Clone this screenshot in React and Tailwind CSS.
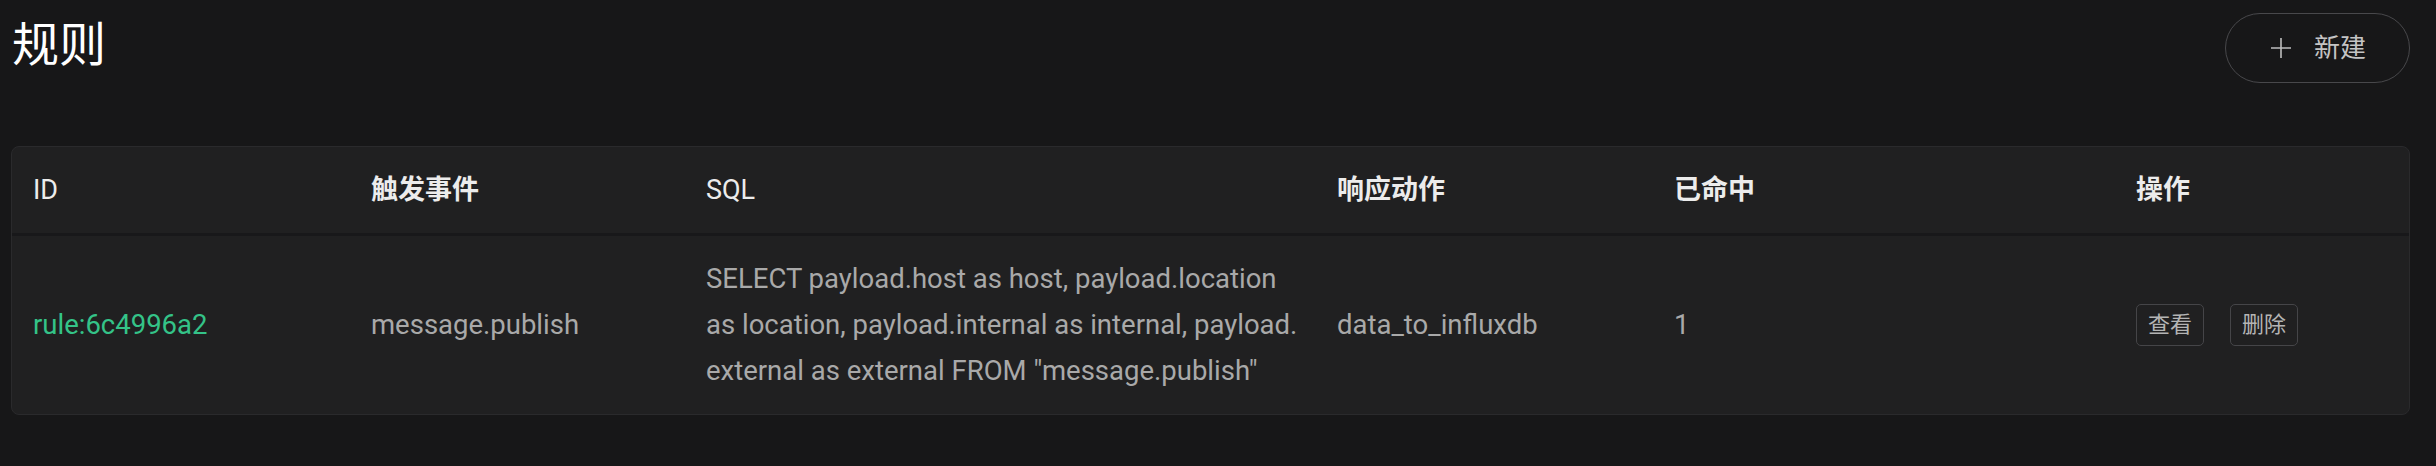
import React from 'react';

const font = { fontFamily: '"Roboto", "Noto Sans CJK SC", sans-serif' };

// latin headers render regular, CJK headers bold
const columns = [
  { label: 'ID', bold: false },
  { label: '触发事件', bold: true },
  { label: 'SQL', bold: false },
  { label: '响应动作', bold: true },
  { label: '已命中', bold: true },
  { label: '操作', bold: true },
];

const rules = [
  {
    id: 'rule:6c4996a2',
    event: 'message.publish',
    sql: [
      'SELECT payload.host as host, payload.location',
      'as location, payload.internal as internal, payload.',
      'external as external FROM "message.publish"',
    ],
    action: 'data_to_influxdb',
    hits: 1,
  },
];

const gridCols = 'grid grid-cols-[338px_335px_631px_337px_462px_1fr]';

const PlusIcon = () => (
  <svg width="24" height="24" viewBox="0 0 24 24" fill="none" stroke="#bdbdbd" strokeWidth="1.6">
    <path d="M12 2v20M2 12h20" />
  </svg>
);

const App = () => {
  return (
    <div className="min-h-[466px] w-full bg-[#171718] pl-[11px] pr-[26px] pt-[13px]" style={font}>
      <div className="flex items-start justify-between">
        <h1 className="ml-[1px] mt-[1px] text-[47px] leading-[62px] font-normal text-white">规则</h1>
        <button className="flex h-[70px] w-[185px] items-center justify-center gap-[21px] rounded-full border-[1.5px] border-[#48484b] text-[26px] text-[#c4c4c4]">
          <PlusIcon />
          <span>新建</span>
        </button>
      </div>

      <div className="mt-[63px] overflow-hidden rounded-[8px] border-[1.5px] border-[#2a2a2c] bg-[#202021]">
        <div className={`${gridCols} h-[89px] items-center border-b-[3px] border-[#18181a]`}>
          {columns.map(c => (
            <div
              key={c.label}
              className={`px-[21px] text-[27px] text-[#ececec] ${c.bold ? 'font-bold' : 'font-normal'}`}
            >
              {c.label}
            </div>
          ))}
        </div>
        {rules.map(rule => (
          <div key={rule.id} className={`${gridCols} items-center py-[20px] text-[27.5px] leading-[46px] text-[#a9a9a9]`}>
            <div className="px-[21px] text-[#34c388]">{rule.id}</div>
            <div className="px-[21px]">{rule.event}</div>
            <div className="px-[21px] whitespace-nowrap">
              {rule.sql.map(line => (
                <div key={line}>{line}</div>
              ))}
            </div>
            <div className="px-[21px]">{rule.action}</div>
            <div className="px-[21px]">{rule.hits}</div>
            <div className="flex gap-[26px] px-[21px]">
              <button className="h-[42px] w-[68px] rounded-[5px] border-[1.5px] border-[#454548] text-[22px] leading-none text-[#b4b4b4]">查看</button>
              <button className="h-[42px] w-[68px] rounded-[5px] border-[1.5px] border-[#454548] text-[22px] leading-none text-[#b4b4b4]">删除</button>
            </div>
          </div>
        ))}
      </div>
    </div>
  );
};

export default App;
